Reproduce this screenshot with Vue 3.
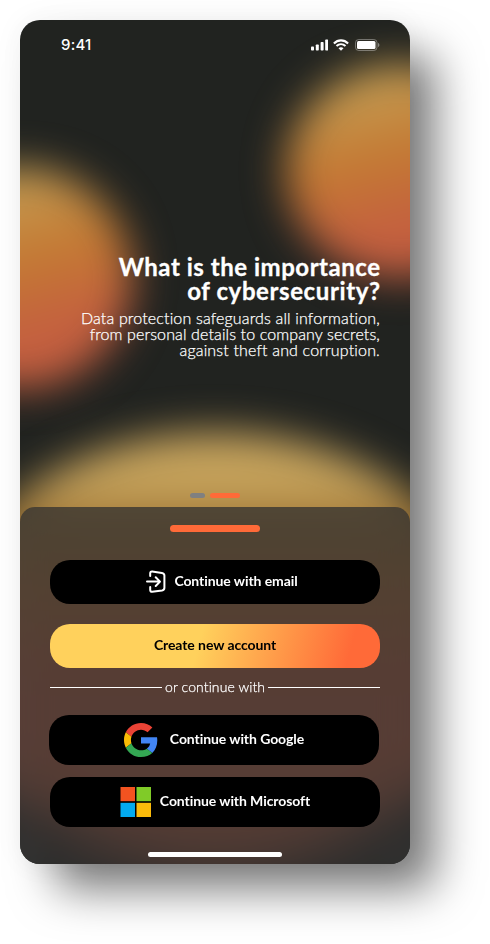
<script setup>
const signalBars = [
  { x: 0, y: 7.5, h: 4 },
  { x: 4.8, y: 5.5, h: 6 },
  { x: 9.6, y: 3, h: 8.5 },
  { x: 14.2, y: 0.5, h: 11 },
]
</script>

<template>
  <main class="stage">
    <section class="phone">
      <div class="backdrop">
        <span class="blob blob-left"></span>
        <span class="blob blob-right"></span>
        <span class="blob blob-bottom"></span>
      </div>

      <header class="status">
        <span class="time">9:41</span>
        <div class="indicators">
          <svg width="17" height="12" viewBox="0 0 17 12">
            <rect v-for="b in signalBars" :key="b.x" :x="b.x" :y="b.y" width="3" :height="b.h" rx="0.8" fill="#fff" />
          </svg>
          <svg class="wifi" width="16" height="12" viewBox="0 0 16 12" fill="none" stroke="#fff" stroke-width="2.1">
            <path d="M.9 4.400C5 .3 11 .3 15.100 4.400" />
            <path d="M3.500 7.100C6.100 4.700 9.900 4.700 12.500 7.100" />
            <path d="M8 11.700 5.500 9.200C6.900 7.900 9.100 7.900 10.500 9.200Z" fill="#fff" stroke="none" />
          </svg>
          <svg width="25" height="12" viewBox="0 0 25 12">
            <rect x="0.5" y="0.5" width="21.5" height="11" rx="3.2" fill="none" stroke="#fff" stroke-opacity=".35" />
            <rect x="2" y="2" width="18.5" height="8" rx="1.5" fill="#fff" />
            <path d="M23 4v4c.9-.3 1.4-1.1 1.4-2S23.900 4.300 23 4Z" fill="#fff" fill-opacity=".4" />
          </svg>
        </div>
      </header>

      <div class="intro">
        <h1><span class="h-a">What is the importance</span><br /><span class="h-b">of cybersecurity?</span></h1>
        <p>
          <span class="p-a">Data protection safeguards all information,</span><br />
          <span class="p-b">from personal details to company secrets,</span><br />
          <span class="p-c">against theft and corruption.</span>
        </p>
      </div>

      <div class="pager"><i class="dot"></i><i class="dot active"></i></div>

      <div class="sheet">
        <div class="grabber"></div>
        <button class="btn email">
          <svg width="20" height="24" viewBox="0 0 20 24" fill="none" stroke="#fff" stroke-width="2" stroke-linecap="round" stroke-linejoin="round">
            <path d="M4.200 6V3.200C4.200 2 5 1.400 6.200 1.500L15.900 2.900C17.600 3.200 18.400 4 18.400 5.500V17.700C18.400 19.300 17.600 20.100 16 20.400L6.200 21.700C5 21.900 4.200 21.200 4.200 20V17" />
            <path d="M1 11.600H13.500M9.700 7.200 14 11.600 9.700 16" />
          </svg>
          <span>Continue with email</span>
        </button>
        <button class="btn create"><span>Create new account</span></button>
        <div class="divider"><i></i><span>or continue with</span><i></i></div>
        <button class="btn google">
          <svg width="34" height="34" viewBox="0 0 48 48">
            <path fill="#EA4335" d="M24 9.500c3.540 0 6.710 1.220 9.210 3.600l6.850-6.850C35.900 2.380 30.470 0 24 0 14.620 0 6.510 5.380 2.560 13.220l7.980 6.190C12.430 13.720 17.740 9.500 24 9.500z" />
            <path fill="#4285F4" d="M46.980 24.550c0-1.570-.15-3.090-.38-4.550H24v9.020h12.940c-.58 2.960-2.260 5.480-4.780 7.180l7.730 6c4.510-4.180 7.090-10.360 7.090-17.650z" />
            <path fill="#FBBC05" d="M10.530 28.590c-.48-1.450-.76-2.990-.76-4.590s.27-3.140.76-4.590l-7.980-6.190C.92 16.460 0 20.120 0 24c0 3.880.92 7.540 2.560 10.780l7.970-6.190z" />
            <path fill="#34A853" d="M24 48c6.480 0 11.930-2.130 15.890-5.810l-7.730-6c-2.150 1.450-4.920 2.300-8.160 2.300-6.260 0-11.570-4.220-13.470-9.910l-7.980 6.190C6.510 42.620 14.620 48 24 48z" />
          </svg>
          <span>Continue with Google</span>
        </button>
        <button class="btn microsoft">
          <svg width="31" height="30" viewBox="0 0 31 30">
            <path fill="#f35320" d="M.5 0H15v14.200H.5Z" />
            <path fill="#80cb28" d="M16.500 0H31v14.200H16.500Z" />
            <path fill="#03aaf0" d="M.5 15.800H15V30H.5Z" />
            <path fill="#fbbb0b" d="M16.500 15.800H31V30H16.500Z" />
          </svg>
          <span>Continue with Microsoft</span>
        </button>
        <div class="home"></div>
      </div>
    </section>
  </main>
</template>

<style>
body { background: #fff; }
</style>

<style scoped>
.stage { box-sizing: border-box; width: 490px; height: 944px; padding: 20px; overflow: hidden; font-family: Lato, sans-serif; font-variant-ligatures: none; color: #fff; }
.phone { position: relative; display: flex; flex-direction: column; width: 390px; height: 844px; border-radius: 20px; background: #212320; box-shadow: 30px 30px 45px -5px rgba(0, 0, 0, .53), 0 0 30px rgba(0, 0, 0, .05); }
.backdrop { position: absolute; inset: 0; overflow: hidden; border-radius: 20px; }
.blob { position: absolute; border-radius: 50%; filter: blur(20px); background: linear-gradient(165deg, #c4a45a 8%, #c47a33 43%, #c45f40 72%); }
.blob-left { left: -114px; top: 147px; width: 226px; height: 222px; }
.blob-right { left: 266px; top: 44px; width: 228px; height: 214px; }
.blob-bottom { left: -80px; top: 412px; width: 550px; height: 428px; background: linear-gradient(180deg, #c6a35c 13%, #9c7232 22%, #b87033 36%, #c45f40 58%); }
.status { position: relative; display: flex; justify-content: space-between; align-items: center; height: 18px; margin: 16px 30px 0 41px; }
.time { font: 500 15px/18px Inter, sans-serif; letter-spacing: .2px; }
.indicators { display: flex; align-items: center; gap: 5px; }
.wifi { margin-right: 1px; }
.intro { position: relative; margin: 201px 30px 0 0; text-align: right; }
h1 { margin: 0; font-size: 24px; line-height: 24px; font-weight: 700; white-space: nowrap; -webkit-text-stroke: .3px #fff; }
p { margin: 7px 0 0; font-size: 16px; line-height: 16px; font-weight: 300; white-space: nowrap; -webkit-text-stroke: .25px #fff; }
.h-a { letter-spacing: .52px; margin-right: -.52px; }
.h-b { letter-spacing: .6px; margin-right: -.6px; }
.p-a, .p-c { letter-spacing: .16px; }
.p-b { letter-spacing: .12px; }
.pager { position: relative; display: flex; justify-content: center; gap: 5px; margin-top: 135px; }
.dot { width: 15px; height: 5px; border-radius: 2.5px; background: #808080; }
.dot.active { width: 30px; background: #ff6a38; }
.sheet { position: relative; box-sizing: border-box; display: flex; flex-direction: column; align-items: center; height: 357px; margin-top: auto; padding: 18px 30px 0; border-radius: 15px 15px 20px 20px; background: rgba(50, 50, 50, .75); backdrop-filter: blur(15px); }
.grabber { flex: none; width: 90px; height: 7px; border-radius: 3.5px; background: #ff6a38; }
.btn { display: flex; align-items: center; justify-content: center; flex: none; width: 330px; padding: 0; border: 0; border-radius: 20px; background: #000; color: #fff; font: 700 14px/18px Lato, sans-serif; letter-spacing: -.08px; white-space: nowrap; }
.btn span { margin-top: -2px; }
.email { height: 44px; margin-top: 28px; gap: 8px; padding-left: 14px; }
.create { height: 44px; margin-top: 20px; color: #000; background: linear-gradient(105deg, #ffd15c 45%, #ff6a38 90%); }
.divider { display: flex; align-items: center; gap: 3px; width: 330px; height: 20px; margin-top: 9px; font-size: 14px; line-height: 20px; font-weight: 300; white-space: nowrap; }
.divider span { width: 100px; text-align: center; letter-spacing: .1px; -webkit-text-stroke: .25px #fff; }
.divider i { flex: 1; height: 1px; background: #fff; }
.google { height: 50px; margin: 18px 2px 0 0; gap: 12px; }
.microsoft { height: 50px; margin-top: 12px; gap: 9px; }
.home { flex: none; width: 134px; height: 5px; margin-top: 25px; border-radius: 3px; background: #fff; }
</style>
